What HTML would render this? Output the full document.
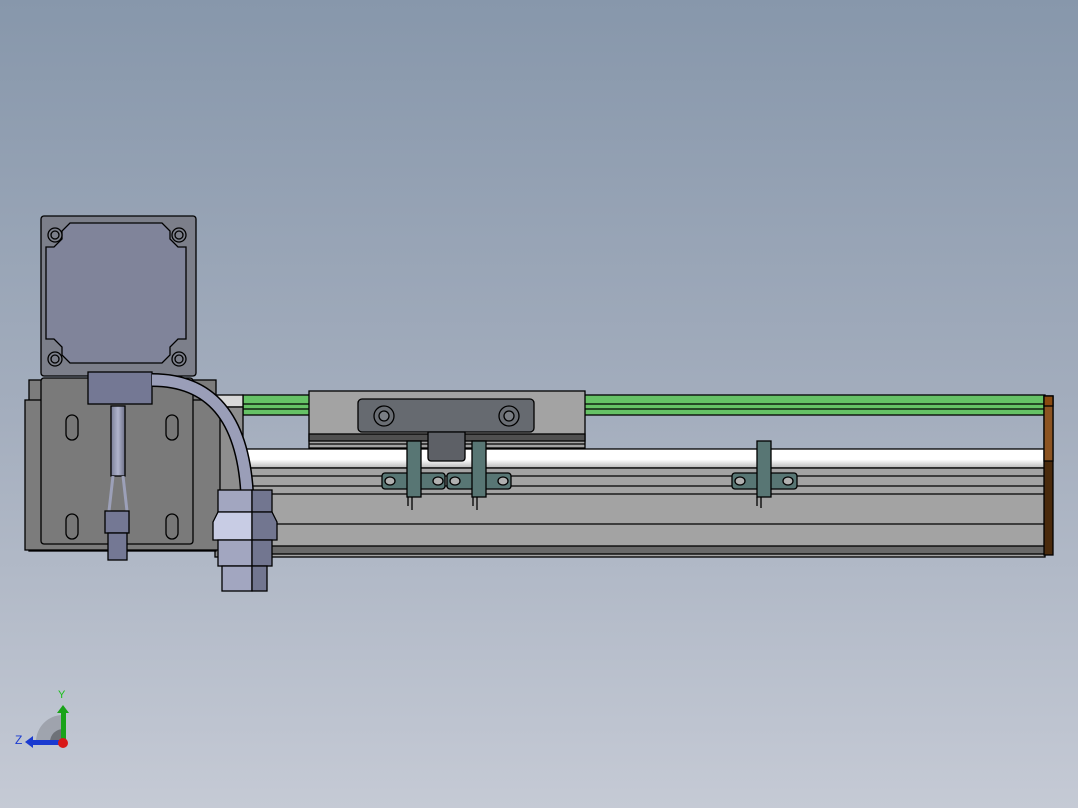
<!DOCTYPE html>
<html><head><style>html,body{margin:0;padding:0;width:1078px;height:808px;overflow:hidden}</style></head>
<body>
<svg width="1078" height="808" viewBox="0 0 1078 808" xmlns="http://www.w3.org/2000/svg">
<defs>
<linearGradient id="bg" x1="0" y1="0" x2="0" y2="1">
<stop offset="0" stop-color="#8797ab"/><stop offset="0.5" stop-color="#a3adbd"/><stop offset="1" stop-color="#c5cad5"/></linearGradient>
<linearGradient id="rod" x1="0" y1="0" x2="0" y2="1">
<stop offset="0" stop-color="#ffffff"/><stop offset="0.55" stop-color="#ffffff"/><stop offset="1" stop-color="#b8b8b8"/></linearGradient>
<linearGradient id="cab" x1="0" y1="0" x2="1" y2="0">
<stop offset="0" stop-color="#7a7f98"/><stop offset="0.5" stop-color="#b0b4cc"/><stop offset="1" stop-color="#6d7088"/></linearGradient>
</defs>
<rect width="1078" height="808" fill="url(#bg)"/>
<g stroke="#000" stroke-width="1.3">
<!-- rail -->
<rect x="243" y="395" width="802" height="20" fill="#66c266"/>
<line x1="243" y1="404" x2="1045" y2="404"/><line x1="243" y1="409" x2="1045" y2="409"/>
<rect x="243" y="449" width="802" height="19" fill="url(#rod)"/>
<rect x="243" y="468" width="802" height="89" fill="#a3a3a3"/>
<line x1="243" y1="476" x2="1045" y2="476"/><line x1="243" y1="486" x2="1045" y2="486"/>
<line x1="243" y1="494" x2="1045" y2="494"/><line x1="243" y1="524" x2="1045" y2="524"/>
<rect x="243" y="546" width="802" height="8" fill="#6a6a6a"/>
<rect x="215" y="395" width="28" height="12" fill="#d8d8d8"/>
<rect x="215" y="407" width="28" height="150" fill="#8e8e8e"/>
<!-- end cap -->
<rect x="1044" y="396" width="9" height="159" fill="#4a2a0c"/>
<rect x="1044" y="396" width="9" height="65" fill="#8c5422"/>
<rect x="1044" y="396" width="9" height="10" fill="#8a4a10"/>
<!-- carriage -->
<rect x="309" y="391" width="276" height="57" fill="#a3a3a3"/>
<rect x="309" y="434" width="276" height="7" fill="#505050"/>
<line x1="309" y1="444" x2="585" y2="444"/>
<rect x="358" y="399" width="176" height="33" rx="4" fill="#666a70"/>
<circle cx="384" cy="416" r="10" fill="#6a6e74"/><circle cx="384" cy="416" r="5" fill="#7a7e84"/>
<circle cx="509" cy="416" r="10" fill="#6a6e74"/><circle cx="509" cy="416" r="5" fill="#7a7e84"/>
<path d="M428 432h37v26a3 3 0 0 1-3 3h-31a3 3 0 0 1-3-3z" fill="#5d6066"/>
<!-- sensors -->
<rect x="382" y="473" width="63" height="16" rx="3" fill="#587674"/>
<rect x="447" y="473" width="64" height="16" rx="3" fill="#587674"/>
<ellipse cx="390" cy="481" rx="5" ry="4" fill="#b0b0b0"/><ellipse cx="438" cy="481" rx="5" ry="4" fill="#b0b0b0"/>
<ellipse cx="455" cy="481" rx="5" ry="4" fill="#b0b0b0"/><ellipse cx="503" cy="481" rx="5" ry="4" fill="#b0b0b0"/>
<rect x="407" y="441" width="14" height="56" fill="#587674"/>
<rect x="472" y="441" width="14" height="56" fill="#587674"/>
<line x1="408" y1="497" x2="408" y2="506"/><line x1="412" y1="497" x2="412" y2="510"/>
<line x1="473" y1="497" x2="473" y2="506"/><line x1="477" y1="497" x2="477" y2="510"/>
<rect x="732" y="473" width="65" height="16" rx="3" fill="#587674"/>
<ellipse cx="740" cy="481" rx="5" ry="4" fill="#b0b0b0"/><ellipse cx="788" cy="481" rx="5" ry="4" fill="#b0b0b0"/>
<rect x="757" y="441" width="14" height="56" fill="#587674"/>
<line x1="757" y1="497" x2="757" y2="506"/><line x1="761" y1="497" x2="761" y2="508"/>
<!-- motor base -->
<rect x="29" y="380" width="187" height="171" fill="#7c7c7c"/>
<rect x="25" y="400" width="195" height="150" fill="#7c7c7c"/>
<rect x="41" y="378" width="152" height="166" rx="3" fill="#7a7a7a"/>
<g fill="#777">
<rect x="66" y="415" width="12" height="25" rx="6"/><rect x="166" y="415" width="12" height="25" rx="6"/>
<rect x="66" y="514" width="12" height="25" rx="6"/><rect x="166" y="514" width="12" height="25" rx="6"/></g>
<!-- motor -->
<rect x="41" y="216" width="155" height="160" rx="3" fill="#7c7f8a"/>
<path d="M70 223h92l8 8v8l8 8h8v92l-8 0-8 8v8l-8 8h-92l-8-8v-8l-8-8h-8v-92h8l8-8v-8z" fill="#80849a"/>
<g fill="#7c7f8a"><circle cx="55" cy="235" r="7"/><circle cx="179" cy="235" r="7"/><circle cx="55" cy="359" r="7"/><circle cx="179" cy="359" r="7"/></g>
<g fill="none"><circle cx="55" cy="235" r="4"/><circle cx="179" cy="235" r="4"/><circle cx="55" cy="359" r="4"/><circle cx="179" cy="359" r="4"/></g>
<rect x="88" y="372" width="64" height="32" fill="#747894"/>
<rect x="111" y="406" width="14" height="70" fill="url(#cab)"/>
<path d="M113 476l-4 35M123 476l4 35" fill="none" stroke="#9ca0b8" stroke-width="3"/>
<rect x="105" y="511" width="24" height="22" fill="#747894"/>
<rect x="108" y="533" width="19" height="27" fill="#747894"/>
<!-- cable -->
<path d="M152 380 Q240 380 247 492" fill="none" stroke="#000" stroke-width="14"/>
<path d="M152 380 Q240 380 247 492" fill="none" stroke="#9a9eb8" stroke-width="11"/>
<!-- connector -->
<rect x="218" y="490" width="34" height="22" fill="#a2a6c0"/>
<rect x="252" y="490" width="20" height="22" fill="#727690"/>
<path d="M213 522l5-10h34v28h-39z" fill="#c8cce4"/>
<path d="M252 512h20l5 10v18h-25z" fill="#727690"/>
<rect x="218" y="540" width="34" height="26" fill="#a2a6c0"/><rect x="252" y="540" width="20" height="26" fill="#727690"/>
<rect x="222" y="566" width="30" height="25" fill="#a2a6c0"/><rect x="252" y="566" width="15" height="25" fill="#727690"/>
</g>
<!-- triad -->
<path d="M36 742a27 27 0 0 1 27-27v27z" fill="#8a8e96" opacity="0.6"/>
<path d="M50 742a13 13 0 0 1 13-13v13z" fill="#6e7278"/>
<rect x="61" y="712" width="5" height="30" fill="#1aa31a"/>
<path d="M57 713l6-8 6 8z" fill="#1aa31a"/>
<rect x="32" y="740" width="30" height="5" fill="#1a3ad0"/>
<path d="M33 736l-8 6 8 6z" fill="#1a3ad0"/>
<circle cx="63" cy="743" r="5" fill="#d81818"/>
<text x="58" y="698" font-family="Liberation Sans,sans-serif" font-size="11" fill="#18c018">Y</text>
<text x="15" y="744" font-family="Liberation Sans,sans-serif" font-size="12" fill="#1a3ad0">Z</text>
</svg>
</body></html>
